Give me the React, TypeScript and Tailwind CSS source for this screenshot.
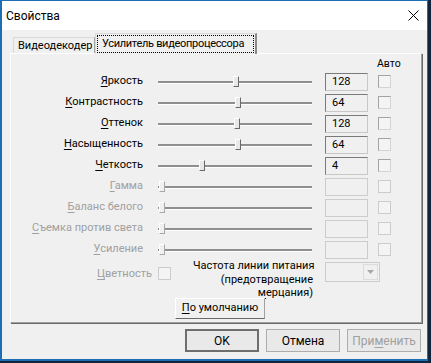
import type { FC } from 'react'

type Row = {
    label: string
    value?: string
    thumb: string
    disabled?: boolean
}

const rows: Row[] = [
    { label: 'Яркость', value: '128', thumb: 'left-[78px]' },
    { label: 'Контрастность', value: '64', thumb: 'left-[80px]' },
    { label: 'Оттенок', value: '128', thumb: 'left-[79px]' },
    { label: 'Насыщенность', value: '64', thumb: 'left-[80px]' },
    { label: 'Четкость', value: '4', thumb: 'left-[44px]' },
    { label: 'Гамма', thumb: 'left-[4px]', disabled: true },
    { label: 'Баланс белого', thumb: 'left-[4px]', disabled: true },
    { label: 'Съемка против света', thumb: 'left-[4px]', disabled: true },
    { label: 'Усиление', thumb: 'left-[4px]', disabled: true },
]

// first letter underlined, like a Win32 accelerator
const Acc: FC<{ text: string; at?: number }> = ({ text, at = 0 }) => (
    <>
        {text.slice(0, at)}
        <span className="underline underline-offset-[2px]">{text[at]}</span>
        {text.slice(at + 1)}
    </>
)

const CheckBox: FC<{ disabled?: boolean }> = ({ disabled }) => (
    <div
        className={
            disabled
                ? 'w-[13px] h-[13px] border border-[#cccccc] bg-[#f4f4f4]'
                : 'w-[13px] h-[13px] border border-[#a3a3a3] border-r-[#d4d4d4] border-b-[#d4d4d4] bg-[#f4f4f4]'
        }
    />
)

const Slider: FC<{ thumb: string; disabled?: boolean }> = ({ thumb, disabled }) => (
    <div className="relative ml-[12px] w-[160px] h-[21px] flex items-center">
        <div className="ml-[3px] w-[154px] h-[2px] bg-[#8f8f8f] shadow-[0_1px_0_#ffffff]" />
        <div
            className={`absolute top-[5px] ${thumb} w-[6px] h-[11px] border-l border-t border-white border-r border-b ${
                disabled ? 'border-r-[#a8a8a8] border-b-[#a8a8a8] bg-[#f0f0f0]' : 'border-r-[#696969] border-b-[#696969] bg-[#e8e8e8]'
            }`}
        />
    </div>
)

const SliderRow: FC<{ row: Row }> = ({ row }) => (
    <div className="flex items-center h-[21px]">
        <div className={`w-[132px] text-right whitespace-nowrap ${row.disabled ? 'text-[#a0a0a0]' : 'text-black'}`}>
            <Acc text={row.label} />
        </div>
        <Slider thumb={row.thumb} disabled={row.disabled} />
        <div
            className={
                row.disabled
                    ? 'ml-[10px] w-[43px] h-[18px] border border-[#cccccc] bg-[#f0f0f0]'
                    : 'ml-[10px] w-[43px] h-[18px] border border-[#7a7a7a] border-r-[#c8c8c8] border-b-[#c8c8c8] bg-[#f0f0f0] pl-[6px] leading-[16px]'
            }
        >
            {row.value}
        </div>
        <div className="ml-[10px]">
            <CheckBox disabled={row.disabled} />
        </div>
    </div>
)

const Button: FC<{ children: React.ReactNode; primary?: boolean; disabled?: boolean }> = ({ children, primary, disabled }) => (
    <div
        className={`w-[74px] h-[23px] flex items-center justify-center bg-[#e9e9e9] ${
            primary ? 'border-2 border-[#6e6e6e]' : 'border border-[#adadad]'
        } ${disabled ? 'text-[#a0a0a0]' : 'text-black'}`}
    >
        {children}
    </div>
)

export default function App() {
    return (
        <div className="w-[431px] h-[363px] bg-[#10263c] font-['Roboto',sans-serif] text-[11px] text-black">
            <div className="w-[428px] h-[361px] border-t border-l-2 border-r border-b-2 border-[#1b6fb5] bg-[#f0f0f0] flex flex-col">
                {/* title bar */}
                <div className="h-[29px] bg-white flex items-center justify-between pl-[4px] pr-[8px]">
                    <span className="text-[12px]">Свойства</span>
                    <svg width="11" height="11" viewBox="0 0 11 11">
                        <path d="M0.5 0.5 L10.5 10.5 M10.5 0.5 L0.5 10.5" stroke="#000" strokeWidth="1" fill="none" />
                    </svg>
                </div>

                {/* tabs */}
                <div className="mt-[3px] ml-[11px] flex items-end h-[20px]">
                    <div className="w-[82px] h-[16px] border-t border-l border-[#d9d9d9] border-r border-r-[#a0a0a0] flex items-center pl-[4px] leading-[14px] whitespace-nowrap">
                        Видеодекодер
                    </div>
                    <div className="relative z-10 -mb-px w-[162px] h-[21px] bg-[#f0f0f0] border-t border-l border-[#d9d9d9] border-r-2 border-r-[#8a8a8a] px-[1px] pt-[1px]">
                        <div className="h-[18px] border border-dotted border-black flex items-center pl-[4px] leading-[14px] whitespace-nowrap tracking-[-0.3px]">
                            Усилитель видеопроцессора
                        </div>
                    </div>
                </div>

                {/* tab panel */}
                <div className="ml-[8px] w-[412px] h-[270px] border-t border-l border-white border-r border-b border-r-[#a0a0a0] border-b-[#a0a0a0] shadow-[1px_1px_0_#696969] flex flex-col">
                    <div className="h-[17px] pl-[366px] pt-[3px] text-[10.5px] leading-[13px]">Авто</div>
                    {rows.map((row) => (
                        <SliderRow key={row.label} row={row} />
                    ))}

                    <div className="flex items-start h-[37px]">
                        <div className="w-[141px] mt-[6px] text-right text-[#a0a0a0]">
                            <Acc text="Цветность" />
                        </div>
                        <div className="ml-[6px] mt-[7px]">
                            <CheckBox disabled />
                        </div>
                        <div className="ml-[22px] -mt-[1px] w-[120px] text-right leading-[13.5px] whitespace-nowrap">
                            <div>Частота линии питания</div>
                            <div>(предотвращение</div>
                            <div>
                                <Acc text="мерцания)" />
                            </div>
                        </div>
                        <div className="ml-[12px] mt-[2px] w-[55px] h-[20px] border border-[#cccccc] bg-[#f0f0f0] flex justify-end p-[1px]">
                            <div className="w-[15px] h-full border border-[#dcdcdc] flex items-center justify-center">
                                <svg width="7" height="4" viewBox="0 0 7 4">
                                    <path d="M0 0 H7 L3.5 4 Z" fill="#a8a8a8" />
                                </svg>
                            </div>
                        </div>
                    </div>

                    <div className="ml-[164px] mt-[1px] w-[90px] h-[21px] border border-white border-r-[#a0a0a0] border-b-[#696969] flex items-center justify-center">
                        <Acc text="По умолчанию" />
                    </div>
                </div>

                {/* dialog buttons */}
                <div className="mt-[6px] ml-[183px] flex gap-[7px] text-[12px]">
                    <Button primary>OK</Button>
                    <Button>Отмена</Button>
                    <Button disabled>
                        <Acc text="Применить" at={3} />
                    </Button>
                </div>
            </div>
        </div>
    )
}
